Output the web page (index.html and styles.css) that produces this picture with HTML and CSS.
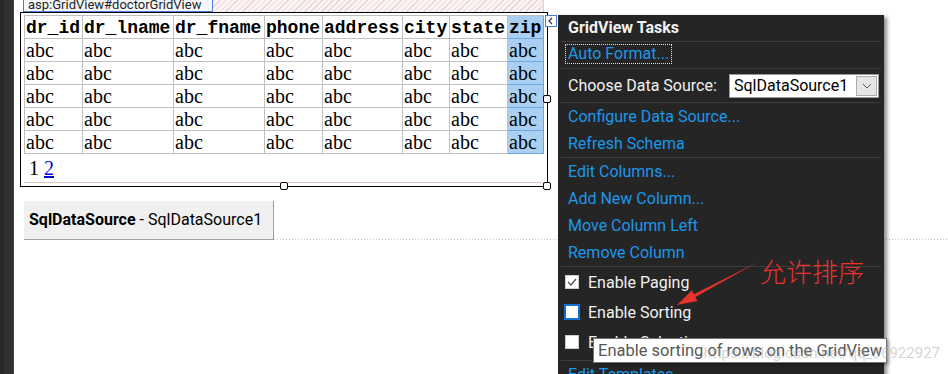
FILE: index.html
```html
<!DOCTYPE html>
<html lang="en">
<head>
    <meta charset="UTF-8">
    <title>GridView Tasks</title>
    <link rel="stylesheet" href="styles.css">
</head>
<body>
    <div class="page">
        <div class="gutter"></div>
        <div class="surface">
            <div class="top-strip">
                <div class="ctl-tag">asp:GridView#doctorGridView</div>
                <div class="hatch"></div>
            </div>

            <div class="grid-frame">
                <table class="grid">
                    <tr>
                        <th class="w-id">dr_id</th>
                        <th class="w-lname">dr_lname</th>
                        <th class="w-fname">dr_fname</th>
                        <th class="w-phone">phone</th>
                        <th class="w-addr">address</th>
                        <th class="w-city">city</th>
                        <th class="w-state">state</th>
                        <th class="w-zip sel">zip</th>
                    </tr>
                    <tr><td>abc</td><td>abc</td><td>abc</td><td>abc</td><td>abc</td><td>abc</td><td>abc</td><td class="sel">abc</td></tr>
                    <tr><td>abc</td><td>abc</td><td>abc</td><td>abc</td><td>abc</td><td>abc</td><td>abc</td><td class="sel">abc</td></tr>
                    <tr><td>abc</td><td>abc</td><td>abc</td><td>abc</td><td>abc</td><td>abc</td><td>abc</td><td class="sel">abc</td></tr>
                    <tr><td>abc</td><td>abc</td><td>abc</td><td>abc</td><td>abc</td><td>abc</td><td>abc</td><td class="sel">abc</td></tr>
                    <tr><td>abc</td><td>abc</td><td>abc</td><td>abc</td><td>abc</td><td>abc</td><td>abc</td><td class="sel">abc</td></tr>
                </table>
                <div class="pager"><span>1</span> <a href="#">2</a></div>

                <span class="handle h-bottom"></span>
                <span class="handle h-corner"></span>
                <span class="handle h-side"></span>
                <span class="smart-tag">
                    <svg width="10" height="10" viewBox="0 0 10 10"><polyline points="6,2 3,5 6,8" fill="none" stroke="#333" stroke-width="1.2"/></svg>
                </span>
            </div>

            <div class="ds-row">
                <div class="ds-box"><b>SqlDataSource</b> - SqlDataSource1</div>
                <div class="ds-rule"></div>
            </div>
        </div>
    </div>

    <!-- smart tag panel -->
    <div class="tasks">
        <div class="tasks-head">GridView Tasks</div>
        <div class="sec sec-format">
            <a class="link focus" href="#">Auto Format...</a>
        </div>
        <div class="sec sec-source">
            <span>Choose Data Source:</span>
            <div class="ds-select">
                <span>SqlDataSource1</span>
                <span class="dd">
                    <svg width="10" height="6" viewBox="0 0 10 6"><polyline points="1,1 5,5 9,1" fill="none" stroke="#555" stroke-width="1"/></svg>
                </span>
            </div>
        </div>
        <div class="sec">
            <a class="row link" href="#">Configure Data Source...</a>
            <a class="row link" href="#">Refresh Schema</a>
        </div>
        <div class="sec">
            <a class="row link" href="#">Edit Columns...</a>
            <a class="row link" href="#">Add New Column...</a>
            <a class="row link" href="#">Move Column Left</a>
            <a class="row link" href="#">Remove Column</a>
        </div>
        <div class="sec sec-checks">
            <div class="check-row">
                <span class="cb">
                    <svg width="12" height="12" viewBox="0 0 12 12"><polyline points="2,6 5,9 10,3" fill="none" stroke="#555" stroke-width="1.4"/></svg>
                </span>
                Enable Paging
            </div>
            <div class="check-row">
                <span class="cb focus"></span>
                Enable Sorting
            </div>
            <div class="check-row">
                <span class="cb"></span>
                Enable Selection
            </div>
        </div>
        <div class="sec">
            <a class="row link" href="#">Edit Templates</a>
        </div>
    </div>

    <div class="tooltip">Enable sorting of rows on the GridView</div>

    <div class="note">允许排序</div>
    <svg class="arrow" width="95" height="55" viewBox="0 0 95 55">
        <polygon points="7,50 21.9,35.3 24,39.3 88,7 25.4,41.9 27.5,45.9" fill="#e8322c"/>
    </svg>

    <div class="watermark">https://blog.csdn.net/qq_36922927</div>
</body>
</html>
```

FILE: styles.css
```css
* {
    box-sizing: border-box;
}
body {
    margin: 0;
    width: 948px;
    height: 374px;
    overflow: hidden;
    position: relative;
    background: #fff;
    font-family: Roboto, "Noto Sans", sans-serif;
}
.page {
    display: flex;
    height: 374px;
}
.gutter {
    width: 14px;
    flex: none;
    background: linear-gradient(to right, #272727 0 4px, #313133 4px 13px, #3e3e42 13px);
}
.surface {
    flex: 1;
}

/* control tag + hatched header */
.top-strip {
    display: flex;
    height: 12px;
    margin-left: 9px;
}
.ctl-tag {
    width: 190px;
    height: 12px;
    border: 1px solid #4d7fd6;
    border-top: none;
    background: #f4f6fa;
    color: #1e1e1e;
    font-size: 13px;
    line-height: 10px;
    padding: 0 4px;
    overflow: hidden;
    white-space: nowrap;
}
.hatch {
    width: 331px;
    background: repeating-linear-gradient(-45deg, #ecd2d2 0 1px, #fbf4f4 1px 4px);
    border-right: 1px solid #d6d6d6;
}

/* grid view */
.grid-frame {
    position: relative;
    margin-left: 6px;
    width: 528px;
    height: 175px;
    border: 1px solid #000;
    padding: 2px 0 0 3px;
}
.grid {
    border-spacing: 0;
    table-layout: fixed;
    width: 520px;
    border-left: 1px solid #c0c0c0;
    border-top: 1px solid #c0c0c0;
}
.grid th,
.grid td {
    height: 23px;
    padding: 0 1px;
    border-right: 1px solid #c0c0c0;
    border-bottom: 1px solid #c0c0c0;
    line-height: 22px;
    text-align: left;
    white-space: nowrap;
    overflow: hidden;
    color: #000;
}
.grid th {
    padding-top: 3px;
    line-height: 19px;
    font-family: "Liberation Mono", monospace;
    font-size: 18px;
    font-weight: bold;
}
.grid td {
    font-family: "Liberation Serif", serif;
    font-size: 20px;
}
.grid .sel {
    background: #a9cff2;
    border-right-color: #6fa7dc;
    border-bottom-color: #6fa7dc;
}
.w-id { width: 58px; }
.w-lname { width: 91px; }
.w-fname { width: 91px; }
.w-phone { width: 58px; }
.w-addr { width: 80px; }
.w-city { width: 47px; }
.w-state { width: 58px; }
.w-zip { width: 36px; }

.pager {
    height: 29px;
    width: 523px;
    padding-left: 5px;
    border-bottom: 1px solid #e2c4c4;
    font-family: "Liberation Serif", serif;
    font-size: 20px;
    line-height: 29px;
    color: #000;
}
.pager a {
    color: #0000ee;
}
.handle {
    position: absolute;
    width: 8px;
    height: 8px;
    border: 1px solid #000;
    border-radius: 2px;
    background: #fff;
}
.h-bottom { left: 259px; top: 169px; }
.h-corner { left: 522px; top: 169px; }
.h-side { left: 522px; top: 82px; }
.smart-tag {
    position: absolute;
    left: 524px;
    top: 2px;
    width: 12px;
    height: 12px;
    border: 1px solid #4d7fd6;
    background: #fff;
    display: flex;
    align-items: center;
    justify-content: center;
}

/* data source control */
.ds-row {
    display: flex;
    align-items: flex-end;
    margin-top: 14px;
}
.ds-box {
    margin-left: 10px;
    width: 250px;
    height: 39px;
    background: #f0f0f0;
    border-right: 1px solid #a0a0a0;
    border-bottom: 1px solid #a0a0a0;
    padding-left: 5px;
    font-size: 16px;
    line-height: 37px;
    color: #000;
    white-space: nowrap;
}
.ds-rule {
    flex: 1;
    height: 1px;
    background-image: linear-gradient(to right, #c4c4c4 1px, transparent 1px);
    background-size: 3px 1px;
}

/* tasks panel */
.tasks {
    position: absolute;
    left: 558px;
    top: 15px;
    width: 326px;
    height: 372px;
    background: #252526;
    box-shadow: 3px 2px 4px rgba(0, 0, 0, 0.45);
    color: #f1f1f1;
    font-size: 16px;
}
.tasks-head {
    height: 27px;
    margin: 0 3px;
    padding-left: 7px;
    border-bottom: 1px solid #3c3c3e;
    font-weight: bold;
    line-height: 26px;
}
.sec {
    margin: 0 3px;
    padding-left: 7px;
    border-bottom: 1px solid #3c3c3e;
}
.link {
    color: #1c97ea;
    text-decoration: none;
}
.row {
    display: block;
    height: 27px;
    line-height: 27px;
}
.sec-format {
    height: 27px;
    padding-top: 2px;
}
.link.focus {
    display: inline-block;
    margin-left: -3px;
    padding: 0 2px;
    height: 20px;
    line-height: 18px;
    border: 1px dotted #e0e0e0;
}
.sec-source {
    height: 34px;
    display: flex;
    align-items: center;
}
.ds-select {
    margin-left: auto;
    margin-right: 2px;
    width: 150px;
    height: 24px;
    display: flex;
    align-items: center;
    padding-left: 4px;
    background: #fff;
    border: 1px solid #9a9a9a;
    color: #000;
}
.dd {
    margin-left: auto;
    margin-right: 1px;
    width: 21px;
    height: 20px;
    background: #e5e5e5;
    border: 1px solid #adadad;
    display: flex;
    align-items: center;
    justify-content: center;
}
.sec-checks {
    padding-bottom: 3px;
}
.check-row {
    height: 30px;
    display: flex;
    align-items: center;
}
.cb {
    width: 14px;
    height: 14px;
    margin-left: -3px;
    margin-right: 9px;
    background: #fff;
    border: 1px solid #cfcfcf;
    display: flex;
    align-items: center;
    justify-content: center;
}
.cb.focus {
    width: 16px;
    height: 16px;
    margin-left: -4px;
    margin-right: 8px;
    border: 2px solid #1670d4;
}

/* overlays */
.tooltip {
    position: absolute;
    left: 593px;
    top: 338px;
    width: 294px;
    height: 25px;
    padding: 0 4px;
    background: #fff;
    border: 1px solid #767676;
    box-shadow: 2px 2px 3px rgba(0, 0, 0, 0.3);
    color: #575757;
    font-size: 16.5px;
    line-height: 23px;
    white-space: nowrap;
}
.note {
    position: absolute;
    left: 760px;
    top: 256px;
    font-family: "Noto Sans CJK SC", sans-serif;
    font-size: 26px;
    font-weight: 300;
    line-height: 30px;
    color: #e8322c;
}
.arrow {
    position: absolute;
    left: 670px;
    top: 255px;
}
.watermark {
    position: absolute;
    right: 8px;
    top: 344px;
    font-size: 15px;
    color: rgba(170, 170, 170, 0.5);
    white-space: nowrap;
}
```
